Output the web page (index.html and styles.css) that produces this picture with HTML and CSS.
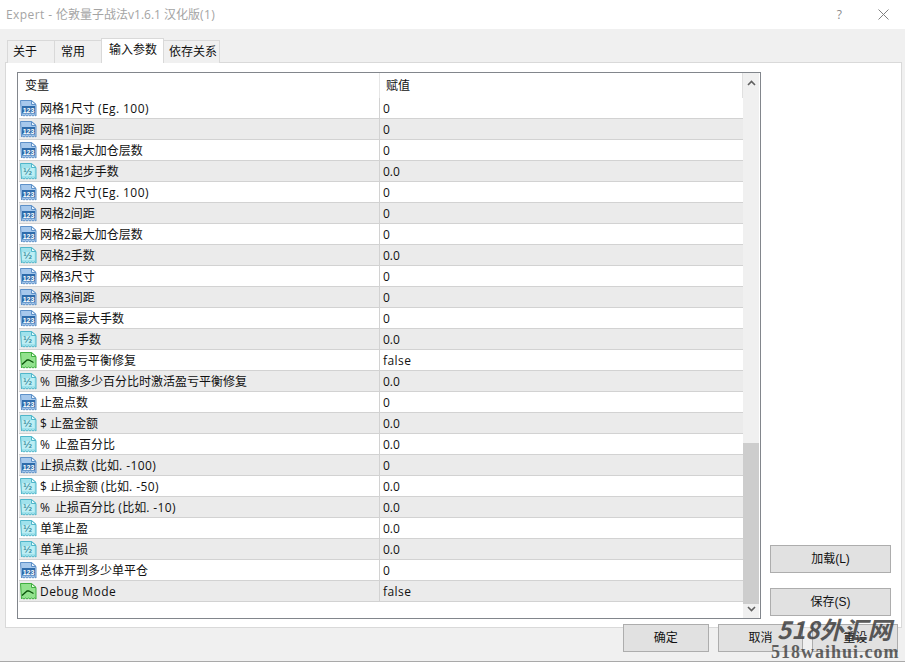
FILE: index.html
```html
<!DOCTYPE html>
<html lang="zh">
<head>
<meta charset="utf-8">
<title>Expert</title>
<link rel="stylesheet" href="styles.css">
</head>
<body>
<svg class="defs" width="0" height="0" aria-hidden="true">
  <defs>
    <symbol id="ic-int" viewBox="0 0 17 17">
      <path d="M.5 .5h11l4.500 4v11.500l-1.500-1-1.500 1-1.500-1-1.500 1-1.500-1-1.500 1-1.500-1-1.500 1-1.500-1-1 1z" fill="#a6c8ec" stroke="#5d90c8"/>
      <path d="M11.500 .5v4h4.500z" fill="#e6f1fb" stroke="#5d90c8"/>
      <rect x="2" y="6" width="13" height="7.500" fill="#2f6cab"/>
      <text x="8.500" y="12.500" class="ic-text">123</text>
    </symbol>
    <symbol id="ic-dbl" viewBox="0 0 17 17">
      <path d="M.5 .5h11l4.500 4v11.500l-1.500-1-1.500 1-1.500-1-1.500 1-1.500-1-1.500 1-1.500-1-1.500 1-1.500-1-1 1z" fill="#a0e2ec" stroke="#4fb6ca"/>
      <path d="M11.500 .5v4h4.500z" fill="#e6fafc" stroke="#4fb6ca"/>
      <rect x="2" y="5" width="12.500" height="8" fill="#bdeef4"/>
      <text x="7.500" y="12.200" class="ic-half">½</text>
    </symbol>
    <symbol id="ic-bool" viewBox="0 0 17 17">
      <path d="M.5 .5h11l4.500 4v11.500l-1.500-1-1.500 1-1.500-1-1.500 1-1.500-1-1.500 1-1.500-1-1.500 1-1.500-1-1 1z" fill="#92e28e" stroke="#3fae3f"/>
      <path d="M11.500 .5v4h4.500z" fill="#e2fae0" stroke="#3fae3f"/>
      <path d="M2 12.500l5-4.500h2l4.500 2.500" fill="none" stroke="#0b540b" stroke-width="1.400" stroke-linejoin="bevel"/>
    </symbol>
  </defs>
</svg>
<div class="window">
  <header class="titlebar">
    <span class="title"><span class="lat">Expert - </span>伦敦量子战法v1.6.1 汉化版<span class="lat">(1)</span></span>
    <span class="help">?</span>
    <svg class="close" width="11" height="11" viewBox="0 0 11 11"><path d="M.5.5l10 10M10.500.5l-10 10" stroke="#808080" stroke-width="1" fill="none"/></svg>
  </header>
  <main class="dialog">
    <nav class="tabs">
      <span class="tab tab-a">关于</span>
      <span class="tab tab-b">常用</span>
      <span class="tab tab-active">输入参数</span>
      <span class="tab tab-d">依存关系</span>
    </nav>
    <section class="panel">
      <div class="listbox">
        <div class="table">
          <div class="head"><span class="col-name">变量</span><span class="col-val">赋值</span></div>
          <div class="row"><span class="col-name"><svg class="ic"><use href="#ic-int"/></svg><span>网格1尺寸 <span class="lat">(Eg. 100)</span></span></span><span class="col-val">0</span></div>
          <div class="row alt"><span class="col-name"><svg class="ic"><use href="#ic-int"/></svg>网格1间距</span><span class="col-val">0</span></div>
          <div class="row"><span class="col-name"><svg class="ic"><use href="#ic-int"/></svg>网格1最大加仓层数</span><span class="col-val">0</span></div>
          <div class="row alt"><span class="col-name"><svg class="ic"><use href="#ic-dbl"/></svg>网格1起步手数</span><span class="col-val">0.0</span></div>
          <div class="row"><span class="col-name"><svg class="ic"><use href="#ic-int"/></svg><span>网格2 尺寸<span class="lat">(Eg. 100)</span></span></span><span class="col-val">0</span></div>
          <div class="row alt"><span class="col-name"><svg class="ic"><use href="#ic-int"/></svg>网格2间距</span><span class="col-val">0</span></div>
          <div class="row"><span class="col-name"><svg class="ic"><use href="#ic-int"/></svg>网格2最大加仓层数</span><span class="col-val">0</span></div>
          <div class="row alt"><span class="col-name"><svg class="ic"><use href="#ic-dbl"/></svg>网格2手数</span><span class="col-val">0.0</span></div>
          <div class="row"><span class="col-name"><svg class="ic"><use href="#ic-int"/></svg>网格3尺寸</span><span class="col-val">0</span></div>
          <div class="row alt"><span class="col-name"><svg class="ic"><use href="#ic-int"/></svg>网格3间距</span><span class="col-val">0</span></div>
          <div class="row"><span class="col-name"><svg class="ic"><use href="#ic-int"/></svg>网格三最大手数</span><span class="col-val">0</span></div>
          <div class="row alt"><span class="col-name"><svg class="ic"><use href="#ic-dbl"/></svg><span>网格 3 手数</span></span><span class="col-val">0.0</span></div>
          <div class="row"><span class="col-name"><svg class="ic"><use href="#ic-bool"/></svg>使用盈亏平衡修复</span><span class="col-val"><span class="lat">false</span></span></div>
          <div class="row alt"><span class="col-name"><svg class="ic"><use href="#ic-dbl"/></svg><span><span class="pct">% </span>回撤多少百分比时激活盈亏平衡修复</span></span><span class="col-val">0.0</span></div>
          <div class="row"><span class="col-name"><svg class="ic"><use href="#ic-int"/></svg>止盈点数</span><span class="col-val">0</span></div>
          <div class="row alt"><span class="col-name"><svg class="ic"><use href="#ic-dbl"/></svg>$ 止盈金额</span><span class="col-val">0.0</span></div>
          <div class="row"><span class="col-name"><svg class="ic"><use href="#ic-dbl"/></svg><span><span class="pct">% </span>止盈百分比</span></span><span class="col-val">0.0</span></div>
          <div class="row alt"><span class="col-name"><svg class="ic"><use href="#ic-int"/></svg><span>止损点数 <span class="lat">(</span>比如<span class="lat">. -100)</span></span></span><span class="col-val">0</span></div>
          <div class="row"><span class="col-name"><svg class="ic"><use href="#ic-dbl"/></svg><span>$ 止损金额 <span class="lat">(</span>比如<span class="lat">. -50)</span></span></span><span class="col-val">0.0</span></div>
          <div class="row alt"><span class="col-name"><svg class="ic"><use href="#ic-dbl"/></svg><span><span class="pct">% </span>止损百分比 <span class="lat">(</span>比如<span class="lat">. -10)</span></span></span><span class="col-val">0.0</span></div>
          <div class="row"><span class="col-name"><svg class="ic"><use href="#ic-dbl"/></svg>单笔止盈</span><span class="col-val">0.0</span></div>
          <div class="row alt"><span class="col-name"><svg class="ic"><use href="#ic-dbl"/></svg>单笔止损</span><span class="col-val">0.0</span></div>
          <div class="row"><span class="col-name"><svg class="ic"><use href="#ic-int"/></svg>总体开到多少单平仓</span><span class="col-val">0</span></div>
          <div class="row alt"><span class="col-name"><svg class="ic"><use href="#ic-bool"/></svg><span class="lat">Debug Mode</span></span><span class="col-val"><span class="lat">false</span></span></div>
        </div>
        <div class="scrollbar">
          <svg class="arrow arrow-up" width="9" height="6" viewBox="0 0 9 6"><path d="M1 5l3.500-3.500L8 5" fill="none" stroke="#606060" stroke-width="1.600"/></svg>
          <div class="track"><div class="thumb"></div></div>
          <svg class="arrow arrow-down" width="9" height="6" viewBox="0 0 9 6"><path d="M1 1l3.500 3.500L8 1" fill="none" stroke="#606060" stroke-width="1.600"/></svg>
        </div>
      </div>
      <aside class="side">
        <button class="btn btn-side">加载(L)</button>
        <button class="btn btn-side">保存(S)</button>
      </aside>
    </section>
    <footer class="actions">
      <button class="btn btn-foot">确定</button>
      <button class="btn btn-foot">取消</button>
      <button class="btn btn-foot">重设</button>
    </footer>
  </main>
</div>
<div class="watermark">
  <div class="wm-top">518外汇网</div>
  <div class="wm-bottom">518waihui.com</div>
</div>
</body>
</html>
```
FILE: styles.css
```css
* { box-sizing: border-box; }
html, body { margin: 0; padding: 0; }
body {
  width: 905px; height: 662px; overflow: hidden; position: relative;
  font-family: "Open Sans", "Noto Sans CJK SC", sans-serif;
  font-size: 12px; line-height: 16px; color: #111; background: #fff;
}
.defs { position: absolute; }
.lat { letter-spacing: .42px; }
.pct { letter-spacing: 1px; }
.ic-text { font: bold 7px "Liberation Sans", sans-serif; fill: #fff; text-anchor: middle; }
.ic-half { font: 9.500px "DejaVu Sans", sans-serif; fill: #1a7488; text-anchor: middle; }
.window { display: flex; flex-direction: column; height: 662px; }
.titlebar {
  height: 29px; flex: none; display: flex; align-items: center; background: #fff;
  padding: 0 16px 0 6px;
}
.title { font-size: 12px; color: #a4a4a4; flex: 1; white-space: pre; }
.help { font-size: 12px; color: #8a8a8a; margin-right: 36px; }
.dialog {
  flex: 1; background: #f0f0f0; padding: 9px 3px 0 5px; display: flex; flex-direction: column;
  border-bottom: 1px solid #a9a9a9;
}
.tabs { display: flex; align-items: flex-end; height: 25px; padding-left: 2px; margin-bottom: -1px; position: relative; z-index: 1; }
.tab {
  height: 23px; border: 1px solid #d9d9d9; border-bottom: none; border-right: none; background: #f0f0f0;
  display: flex; align-items: center; font-size: 12px; color: #111; white-space: nowrap;
}
.tab-a { width: 47px; padding-left: 5px; }
.tab-b { width: 47px; padding-left: 6px; }
.tab-active { width: 63px; height: 25px; background: #fff; border-right: 1px solid #d9d9d9; padding: 0 0 3px 7px; }
.tab-d { width: 56px; border-left: none; border-right: 1px solid #d9d9d9; padding-left: 5px; }
.panel {
  height: 566px; flex: none; background: #fff; border: 1px solid #d9d9d9; display: flex;
  padding: 9px 0 0 11px;
}
.listbox {
  width: 744px; height: 547px; flex: none; border: 1px solid #82868c; display: flex; background: #fff; padding-left: 1px;
}
.table { width: 724px; flex: none; }
.head, .row { display: flex; }
.head { height: 25px; align-items: center; border-right: 1px solid #e0e0e0; }
.row { height: 21px; align-items: center; border-bottom: 1px solid #d2d2d2; }
.alt { background: #ebebeb; }
.col-name { width: 361px; height: 100%; display: flex; align-items: center; flex: none; border-right: 1px solid #d2d2d2; padding: 1px 0 0 1px; white-space: pre; }
.head .col-name { padding: 0 0 0 6px; border-right-color: #e6e6e6; }
.col-val { height: 100%; display: flex; align-items: center; padding: 1px 0 0 3px; }
.head .col-val { padding: 0 0 0 6px; }
.ic { width: 17px; height: 17px; margin-right: 3px; flex: none; }
.scrollbar { width: 16px; background: #f0f0f0; display: flex; flex-direction: column; align-items: center; }
.arrow { flex: none; }
.arrow-up { margin: 7px 0; }
.arrow-down { margin: 2px 0 6px; }
.track { flex: 1; align-self: stretch; display: flex; flex-direction: column; justify-content: flex-end; }
.thumb { height: 161px; background: #cdcdcd; }
.side { width: 121px; margin-left: 9px; display: flex; flex-direction: column; justify-content: flex-end; gap: 15px; padding-bottom: 11px; }
.btn {
  background: #e1e1e1; border: 1px solid #adadad; font-family: "Liberation Sans", "Noto Sans CJK SC", sans-serif; font-size: 12px; color: #111; padding: 0 0 3px;
}
.btn-side { width: 121px; height: 28px; flex: none; }
.actions { display: flex; justify-content: flex-end; gap: 9px; margin-top: -4px; padding-right: 4px; position: relative; z-index: 1; }
.btn-foot { width: 85.700px; height: 28px; }
.watermark {
  position: absolute; left: 771px; top: 614px; width: 134px; color: #3e3e3e; z-index: 2;
}
.wm-top { font: italic bold 24px/30px "Noto Sans CJK SC", sans-serif; opacity: .85; padding-left: 6px; white-space: nowrap; }
.wm-bottom { font: bold 18px/17px "Liberation Serif", serif; letter-spacing: 1px; opacity: .8; white-space: nowrap; }
```
